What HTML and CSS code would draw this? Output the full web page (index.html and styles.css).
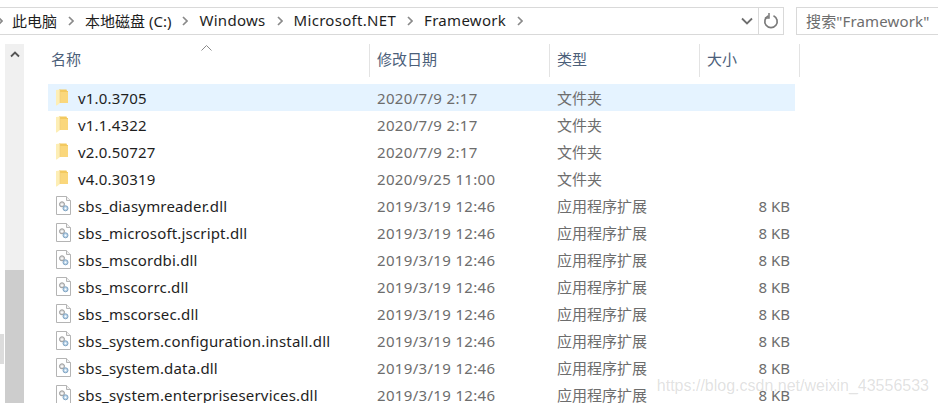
FILE: index.html
```html
<!DOCTYPE html>
<html lang="zh-CN">

<head>
    <meta charset="UTF-8">
    <title>Framework</title>
    <link rel="stylesheet" href="styles.css">
</head>

<body>
    <svg class="defs" width="0" height="0">
        <symbol id="folder" viewBox="0 0 12 17">
            <path d="M3 .5h7.500l.5 1.500h1V14H3z" fill="#f3c95f" />
            <path d="M4 3h8v11H4z" fill="#fad77c" />
            <path d="M0 1 4 .5V14L.6 16.800 0 16z" fill="#fdeeb5" />
            <path d="M4 .5V14" stroke="#eecb78" stroke-width=".6" />
        </symbol>
        <symbol id="dll" viewBox="0 0 15 19">
            <path d="M.5.500h10l4 4v14H.5z" fill="#fff" stroke="#b4b4b4" />
            <path d="M10.500.500v4h4" fill="#f0f0f0" stroke="#b4b4b4" />
            <circle cx="6" cy="8.300" r="2.500" fill="#dcdcdc" stroke="#9a9a9a" />
            <circle cx="6" cy="8.300" r=".9" fill="#fff" />
            <circle cx="9.500" cy="12.300" r="2.500" fill="#b9d3e8" stroke="#7fa3c2" />
            <circle cx="9.500" cy="12.300" r=".9" fill="#fff" />
        </symbol>
        <symbol id="chev" viewBox="0 0 6 10">
            <path d="M1 1l4 4-4 4" fill="none" stroke="#8a8a8a" stroke-width="1.700" />
        </symbol>
    </svg>

    <div class="explorer">
        <div class="toolbar">
            <div class="address">
                <svg class="chev lead"><use href="#chev" /></svg>
                <span class="crumb">此电脑</span>
                <svg class="chev"><use href="#chev" /></svg>
                <span class="crumb">本地磁盘 (C:)</span>
                <svg class="chev"><use href="#chev" /></svg>
                <span class="crumb en">Windows</span>
                <svg class="chev"><use href="#chev" /></svg>
                <span class="crumb en">Microsoft.NET</span>
                <svg class="chev"><use href="#chev" /></svg>
                <span class="crumb en">Framework</span>
                <svg class="chev"><use href="#chev" /></svg>
                <svg class="dropdown" viewBox="0 0 12 8"><path d="M1 1.500 6 6.500l5-5" fill="none" stroke="#6e6e6e" stroke-width="1.800" /></svg>
                <div class="refresh">
                    <svg viewBox="0 0 16 16" width="16" height="16"><path d="M5.500 2.800A6.200 6.200 0 1 0 10.500 2.800" fill="none" stroke="#7a7a7a" stroke-width="1.700" /><path d="M5 .3v5.200H.8" fill="none" stroke="#7a7a7a" stroke-width="1.500" transform="translate(1 -.5)" /></svg>
                </div>
            </div>
            <div class="search">搜索"Framework"</div>
        </div>

        <div class="main">
            <div class="scrollbar">
                <svg class="scroll-up" viewBox="0 0 10 7"><path d="M1 5.500 5 1.500l4 4" fill="none" stroke="#555" stroke-width="1.800" /></svg>
                <div class="thumb"></div>
            </div>

            <div class="files">
                <div class="header">
                    <div class="col">名称
                        <svg class="sort" viewBox="0 0 11 6"><path d="M.5 5.500 5.500.5l5 5" fill="none" stroke="#8a8a8a" /></svg>
                    </div>
                    <div class="col">修改日期</div>
                    <div class="col">类型</div>
                    <div class="col">大小</div>
                </div>

                <div class="row selected">
                    <div class="name"><svg class="icon folder"><use href="#folder" /></svg>v1.0.3705</div>
                    <div class="cell date">2020/7/9 2:17</div>
                    <div class="cell">文件夹</div>
                    <div class="cell size"></div>
                </div>
                <div class="row">
                    <div class="name"><svg class="icon folder"><use href="#folder" /></svg>v1.1.4322</div>
                    <div class="cell date">2020/7/9 2:17</div>
                    <div class="cell">文件夹</div>
                    <div class="cell size"></div>
                </div>
                <div class="row">
                    <div class="name"><svg class="icon folder"><use href="#folder" /></svg>v2.0.50727</div>
                    <div class="cell date">2020/7/9 2:17</div>
                    <div class="cell">文件夹</div>
                    <div class="cell size"></div>
                </div>
                <div class="row">
                    <div class="name"><svg class="icon folder"><use href="#folder" /></svg>v4.0.30319</div>
                    <div class="cell date">2020/9/25 11:00</div>
                    <div class="cell">文件夹</div>
                    <div class="cell size"></div>
                </div>
                <div class="row">
                    <div class="name"><svg class="icon"><use href="#dll" /></svg>sbs_diasymreader.dll</div>
                    <div class="cell date">2019/3/19 12:46</div>
                    <div class="cell">应用程序扩展</div>
                    <div class="cell size">8 KB</div>
                </div>
                <div class="row">
                    <div class="name"><svg class="icon"><use href="#dll" /></svg>sbs_microsoft.jscript.dll</div>
                    <div class="cell date">2019/3/19 12:46</div>
                    <div class="cell">应用程序扩展</div>
                    <div class="cell size">8 KB</div>
                </div>
                <div class="row">
                    <div class="name"><svg class="icon"><use href="#dll" /></svg>sbs_mscordbi.dll</div>
                    <div class="cell date">2019/3/19 12:46</div>
                    <div class="cell">应用程序扩展</div>
                    <div class="cell size">8 KB</div>
                </div>
                <div class="row">
                    <div class="name"><svg class="icon"><use href="#dll" /></svg>sbs_mscorrc.dll</div>
                    <div class="cell date">2019/3/19 12:46</div>
                    <div class="cell">应用程序扩展</div>
                    <div class="cell size">8 KB</div>
                </div>
                <div class="row">
                    <div class="name"><svg class="icon"><use href="#dll" /></svg>sbs_mscorsec.dll</div>
                    <div class="cell date">2019/3/19 12:46</div>
                    <div class="cell">应用程序扩展</div>
                    <div class="cell size">8 KB</div>
                </div>
                <div class="row">
                    <div class="name"><svg class="icon"><use href="#dll" /></svg>sbs_system.configuration.install.dll</div>
                    <div class="cell date">2019/3/19 12:46</div>
                    <div class="cell">应用程序扩展</div>
                    <div class="cell size">8 KB</div>
                </div>
                <div class="row">
                    <div class="name"><svg class="icon"><use href="#dll" /></svg>sbs_system.data.dll</div>
                    <div class="cell date">2019/3/19 12:46</div>
                    <div class="cell">应用程序扩展</div>
                    <div class="cell size">8 KB</div>
                </div>
                <div class="row">
                    <div class="name"><svg class="icon"><use href="#dll" /></svg>sbs_system.enterpriseservices.dll</div>
                    <div class="cell date">2019/3/19 12:46</div>
                    <div class="cell">应用程序扩展</div>
                    <div class="cell size">8 KB</div>
                </div>
            </div>
        </div>

        <div class="edge-tab"></div>
        <div class="watermark">https://blog.csdn.net/weixin_43556533</div>
    </div>
</body>

</html>
```

FILE: styles.css
```css
body {
    margin: 0;
    background: #fff;
    overflow: hidden;
    font-family: "Noto Sans", "Noto Sans CJK SC", sans-serif;
    font-size: 15px;
    color: #1e1e1e;
}

.defs {
    display: block;
    height: 0;
}

.explorer {
    position: relative;
    height: 403px;
    overflow: hidden;
    padding-top: 7px;
    box-sizing: border-box;
}

.toolbar {
    display: flex;
    height: 28px;
}

.address {
    display: flex;
    align-items: center;
    width: 784px;
    box-sizing: border-box;
    border: 1px solid #d9d9d9;
    border-left: none;
}

.crumb {
    position: relative;
    top: -1px;
}

.crumb.en {
    letter-spacing: 0.3px;
}

.chev {
    width: 6px;
    height: 10px;
    margin: 0 11px;
}

.chev.lead {
    margin: 0 9px 0 -3px;
}

.dropdown {
    width: 12px;
    height: 8px;
    margin-left: auto;
    margin-right: 5px;
}

.refresh {
    display: flex;
    align-items: center;
    justify-content: center;
    width: 24px;
    height: 100%;
    border-left: 1px solid #d9d9d9;
}

.search {
    flex: 1;
    margin-left: 12px;
    padding-left: 9px;
    line-height: 26px;
    border: 1px solid #d9d9d9;
    border-right: none;
    color: #6d6d6d;
    white-space: nowrap;
    letter-spacing: 0.15px;
}

.main {
    display: flex;
    margin-top: 9px;
}

.scrollbar {
    flex: none;
    position: relative;
    width: 19px;
    height: 359px;
    margin-left: 5px;
    margin-right: 24px;
    background: #f0f0f0;
}

.scroll-up {
    position: absolute;
    top: 7px;
    left: 5px;
    width: 10px;
    height: 7px;
}

.thumb {
    position: absolute;
    top: 226px;
    bottom: 0;
    left: 0;
    right: 0;
    background: #cdcdcd;
}

.edge-tab {
    position: absolute;
    left: 0;
    top: 334px;
    width: 4px;
    height: 30px;
    background: #dcdcdc;
}

.header {
    display: grid;
    grid-template-columns: 322px 180px 150px 100px;
    height: 33px;
    margin-bottom: 7px;
    color: #4c607a;
}

.col {
    position: relative;
    box-sizing: border-box;
    padding-left: 7px;
    line-height: 31px;
    border-right: 1px solid #e3e3e3;
}

.col:first-child {
    padding-left: 3px;
}

.sort {
    position: absolute;
    left: 153px;
    top: 1px;
    width: 11px;
    height: 6px;
}

.row {
    display: grid;
    grid-template-columns: 322px 180px 143px 97px;
    grid-template-rows: 26px;
    box-sizing: border-box;
    width: 747px;
    height: 27px;
    padding-top: 1px;
    line-height: 27px;
    white-space: nowrap;
    color: #6d6d6d;
}

.row.selected {
    background: #e5f3ff;
}

.name {
    display: flex;
    align-items: center;
    color: #1e1e1e;
    letter-spacing: 0.17px;
}

.icon {
    flex: none;
    width: 15px;
    height: 19px;
    margin-top: -2px;
    margin-left: 8px;
    margin-right: 7px;
}

.icon.folder {
    width: 12px;
    height: 17px;
    margin-right: 10px;
}

.cell {
    padding-left: 7px;
}

.cell.date {
    letter-spacing: 0.33px;
}

.cell.size {
    padding-left: 0;
    text-align: right;
}

.watermark {
    position: absolute;
    right: 9px;
    bottom: 8px;
    font-family: "Liberation Sans", sans-serif;
    font-size: 16px;
    color: rgba(130, 130, 130, 0.24);
}
```
